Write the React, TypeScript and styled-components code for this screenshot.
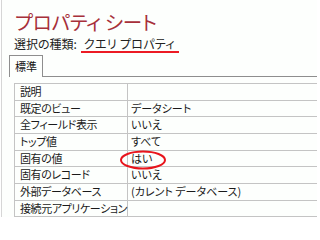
import React from "react";
import styled, { createGlobalStyle } from "styled-components";

const Global = createGlobalStyle`
  html, body { margin: 0; padding: 0; background: #ffffff; }
  body { font-family: "Noto Sans CJK JP", "Noto Sans", sans-serif; }
`;

const Sheet = styled.div`
  width: 316px;
  height: 217px;
  margin-left: 1px;
  border-left: 1px solid #d6d6d6;
  box-sizing: border-box;
  background: #fdfffd;
  overflow: hidden;
  display: flex;
  flex-direction: column;
  font-feature-settings: "palt";
`;

const Header = styled.div`
  padding: 10px 0 0 13px;
  display: flex;
  flex-direction: column;
`;

const Title = styled.div`
  font-size: 19.5px;
  line-height: 24px;
  height: 24px;
  color: #a7303a;
  letter-spacing: -0.2px;
`;

const KindRow = styled.div`
  display: flex;
  align-items: flex-start;
  gap: 4px;
  font-size: 12px;
  line-height: 14px;
  color: #222;
  margin-top: 3px;
  margin-left: -1px;
`;

const KindValue = styled.span`
  display: inline-block;
  padding: 0 4px 0 3px;
  border-bottom: 2px solid #ec1b24;
  letter-spacing: 0.3px;
`;

const TabStrip = styled.div`
  display: flex;
  align-items: flex-end;
  margin-top: 2px;
  padding-left: 7px;
`;

const Tab = styled.div`
  width: 34px;
  height: 22px;
  border: 1px solid #8e8e8e;
  border-bottom: none;
  font-size: 11px;
  line-height: 21px;
  padding-left: 5px;
  box-sizing: border-box;
  color: #111;
`;

const StripLine = styled.div`
  flex: 1;
  border-bottom: 1px solid #8e8e8e;
`;

const Grid = styled.div`
  margin: 6px 0 0 12px;
  border-top: 1px solid #c4c4c4;
  border-left: 1px solid #c4c4c4;
  display: flex;
  flex-direction: column;
`;

const Row = styled.div`
  display: grid;
  grid-template-columns: 113px 1fr;
  height: 16.67px;
  border-bottom: 1px solid #c4c4c4;
  box-sizing: border-box;
  font-size: 11px;
  color: #1a1a1a;
`;

const Cell = styled.div<{ $value?: boolean }>`
  position: relative;
  padding-left: ${(p) => (p.$value ? "3px" : "5px")};
  line-height: 15px;
  white-space: nowrap;
  overflow: visible;
  letter-spacing: ${(p) => (p.$value ? "0" : "-0.4px")};
  border-right: ${(p) => (p.$value ? "none" : "1px solid #c4c4c4")};
`;

const Ring = styled.svg`
  position: absolute;
  left: -9px;
  top: -8px;
  width: 48px;
  height: 20px;
  overflow: visible;
  pointer-events: none;
`;

const rows: [string, string][] = [
  ["説明", ""],
  ["既定のビュー", "データシート"],
  ["全フィールド表示", "いいえ"],
  ["トップ値", "すべて"],
  ["固有の値", "はい"],
  ["固有のレコード", "いいえ"],
  ["外部データベース", "(カレント データベース)"],
  ["接続元アプリケーション", ""],
];

export default function App() {
  return (
    <>
      <Global />
      <Sheet>
        <Header>
          <Title>プロパティ シート</Title>
          <KindRow>
            <span>選択の種類:</span>
            <KindValue>クエリ プロパティ</KindValue>
          </KindRow>
        </Header>
        <TabStrip>
          <Tab>標準</Tab>
          <StripLine />
        </TabStrip>
        <Grid>
          {rows.map(([k, v]) => (
            <Row key={k}>
              <Cell>{k}</Cell>
              <Cell $value>
                {v}
                {k === "固有の値" && (
                  <Ring viewBox="0 0 48 20">
                    <ellipse cx="24" cy="17" rx="22" ry="8.5" fill="none" stroke="#e8141c" strokeWidth="2" />
                  </Ring>
                )}
              </Cell>
            </Row>
          ))}
        </Grid>
      </Sheet>
    </>
  );
}
